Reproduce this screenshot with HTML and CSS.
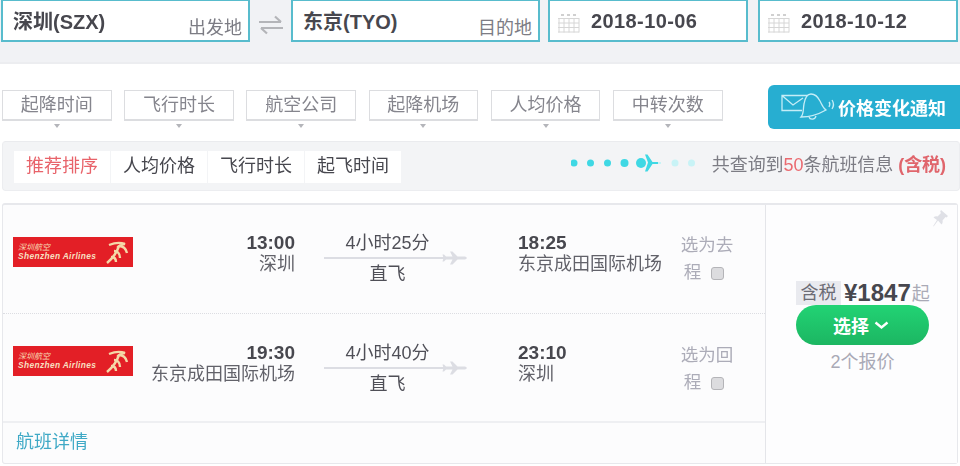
FILE: index.html
```html
<!DOCTYPE html>
<html lang="zh-CN">
<head>
<meta charset="utf-8">
<title>航班查询</title>
<link rel="stylesheet" href="styles.css">
</head>
<body>
<div class="page">
  <header class="search">
    <div class="field field-city"><span class="city">深圳(SZX)</span><span class="hint">出发地</span></div>
    <div class="swap">
      <svg width="26" height="20" viewBox="0 0 26 20"><path d="M1 7h22M17 1.500l6 5.500M25 13H3M9 18.500L3 13" fill="none" stroke="#b4b5b9" stroke-width="2.200"/></svg>
    </div>
    <div class="field field-city"><span class="city">东京(TYO)</span><span class="hint">目的地</span></div>
    <div class="field field-date">
      <svg class="cal" width="22" height="20" viewBox="0 0 22 20"><path d="M0 5.500h21M0 10h21M0 14.500h21M0 19h21M1 5v14.500M6 5v14.500M11 5v14.500M16 5v14.500M21 5v14.500" fill="none" stroke="#d6d6d6"/><path d="M3 1h3v2H3zM9 1h3v2H9zM15 1h3v2h-3z" fill="#d0d0d0"/></svg>
      <span class="date">2018-10-06</span>
    </div>
    <div class="field field-date">
      <svg class="cal" width="22" height="20" viewBox="0 0 22 20"><path d="M0 5.500h21M0 10h21M0 14.500h21M0 19h21M1 5v14.500M6 5v14.500M11 5v14.500M16 5v14.500M21 5v14.500" fill="none" stroke="#d6d6d6"/><path d="M3 1h3v2H3zM9 1h3v2H9zM15 1h3v2h-3z" fill="#d0d0d0"/></svg>
      <span class="date">2018-10-12</span>
    </div>
  </header>

  <section class="filters">
    <div class="filter-list">
      <div class="filter"><div class="filter-btn">起降时间</div><i class="caret"></i></div>
      <div class="filter"><div class="filter-btn">飞行时长</div><i class="caret"></i></div>
      <div class="filter"><div class="filter-btn">航空公司</div><i class="caret"></i></div>
      <div class="filter"><div class="filter-btn">起降机场</div><i class="caret"></i></div>
      <div class="filter"><div class="filter-btn">人均价格</div><i class="caret"></i></div>
      <div class="filter"><div class="filter-btn">中转次数</div><i class="caret"></i></div>
    </div>
    <div class="notify">
      <svg width="58" height="32" viewBox="0 0 58 32" fill="none" stroke="#c5edf7" stroke-width="1.300">
        <path d="M22 19.500H2V4.500h26M2 4.500L13 14l10-7"/>
        <path d="M21 26c3-3 2-8 3-13 1-6 3-10 7-10 4 0 7 3 9 7 2 4 3 7 6 9-7 4-17 7-25 7z" fill="#27aed1"/>
        <path d="M29 26c1 3 6 3 7-1"/>
        <path d="M49 11c1 1 1 3 0 5M52 9c2 3 2 6 0 9"/>
      </svg>
      <span class="notify-text">价格变化通知</span>
    </div>
  </section>

  <section class="sortbar">
    <nav class="tabs">
      <div class="tab tab-on">推荐排序</div>
      <div class="tab">人均价格</div>
      <div class="tab">飞行时长</div>
      <div class="tab">起飞时间</div>
    </nav>
    <div class="summary">
      <svg class="progress" width="132" height="22" viewBox="0 0 132 22">
        <g fill="#3fd8e4">
          <circle cx="3" cy="11" r="3.500"/><circle cx="19.500" cy="11" r="3.500"/><circle cx="36.500" cy="11" r="3.500"/><circle cx="53.500" cy="11" r="4"/><circle cx="70" cy="11" r="5"/>
          <path d="M74 2.500h2.500l5 7.500H87v2h-5.500l-5 7.500H74l3-9z"/>
        </g>
        <g fill="#c8f3f6"><rect x="87" y="10" width="3" height="2"/><circle cx="104" cy="11" r="3.500"/><circle cx="120.500" cy="11" r="3.500"/></g>
      </svg>
      <p class="count">共查询到<em>50</em>条航班信息 <b>(含税)</b></p>
    </div>
  </section>

  <section class="card">
    <div class="legs">
      <div class="leg">
        <svg class="logo" width="120" height="30" viewBox="0 0 120 30"><rect width="120" height="30" fill="#e31f26"/><text x="5" y="13" class="logo-cn">深圳航空</text><text x="5" y="21.500" class="logo-en">Shenzhen Airlines</text><g fill="none" stroke="#f4d9a8" stroke-width="2.400"><path d="M96 8c5-2 11-3 16-1-3 0-5 1-6 2 4 0 7 3 8 7"/><path d="M106 9c-2 6-6 12-12 17"/><path d="M101 14c3 0 6 2 6 7"/><path d="M98 20c3 0 5 1 5 5"/></g></svg>
        <div class="point point-dep"><strong>13:00</strong><span>深圳</span></div>
        <div class="route"><span>4小时25分</span>
          <svg width="144" height="14" viewBox="0 0 144 14"><path d="M0 7h128" stroke="#dcdde3" stroke-width="2"/><path d="M126 .5h2.500l5 5h7c3 0 3 3 0 3h-7l-5 5H126l2.500-5H122l-2 2h-1.500l1-3.500-1-3.500h1.500l2 2h6.500z" fill="#dcdde3"/></svg>
          <span>直飞</span></div>
        <div class="point point-arr"><strong>18:25</strong><span>东京成田国际机场</span></div>
        <label class="pick">选为去程<input type="checkbox" class="check"></label>
      </div>
      <div class="leg leg-next">
        <svg class="logo" width="120" height="30" viewBox="0 0 120 30"><rect width="120" height="30" fill="#e31f26"/><text x="5" y="13" class="logo-cn">深圳航空</text><text x="5" y="21.500" class="logo-en">Shenzhen Airlines</text><g fill="none" stroke="#f4d9a8" stroke-width="2.400"><path d="M96 8c5-2 11-3 16-1-3 0-5 1-6 2 4 0 7 3 8 7"/><path d="M106 9c-2 6-6 12-12 17"/><path d="M101 14c3 0 6 2 6 7"/><path d="M98 20c3 0 5 1 5 5"/></g></svg>
        <div class="point point-dep"><strong>19:30</strong><span>东京成田国际机场</span></div>
        <div class="route"><span>4小时40分</span>
          <svg width="144" height="14" viewBox="0 0 144 14"><path d="M0 7h128" stroke="#dcdde3" stroke-width="2"/><path d="M126 .5h2.500l5 5h7c3 0 3 3 0 3h-7l-5 5H126l2.500-5H122l-2 2h-1.500l1-3.500-1-3.500h1.500l2 2h6.500z" fill="#dcdde3"/></svg>
          <span>直飞</span></div>
        <div class="point point-arr"><strong>23:10</strong><span>深圳</span></div>
        <label class="pick">选为回程<input type="checkbox" class="check"></label>
      </div>
      <div class="details">航班详情</div>
    </div>
    <aside class="offer">
      <svg class="pin" width="15" height="19" viewBox="0 0 15 19"><path d="M8 0l7 6-1.500 1.500-1-.5-3 3.500c.5 1.500 0 3-1 4L5 10.500 1 16l-1 .5.500-1L4 10 .5 7.500c1-1 2.500-1.500 4-1L8 3l-.8-1.200z" fill="#dfe0e6"/></svg>
      <div class="price"><span class="tax">含税</span><strong>¥1847</strong><span class="from">起</span></div>
      <div class="select">选择
        <svg width="15" height="9" viewBox="0 0 15 9"><path d="M1.500 1.500l6 5 6-5" fill="none" stroke="#fff" stroke-width="2.400"/></svg>
      </div>
      <div class="quotes">2个报价</div>
    </aside>
  </section>
</div>
</body>
</html>
```

FILE: styles.css
```css
* { box-sizing: border-box; }
html, body { margin: 0; padding: 0; background: #fff; }
.page {
  width: 960px;
  height: 466px;
  overflow: hidden;
  font-family: "Liberation Sans", "Noto Sans CJK SC", sans-serif;
  color: #4a4a52;
  filter: blur(0.35px);
}

/* search band */
.search {
  display: flex;
  height: 64px;
  padding-left: 1px;
  align-items: flex-start;
  background: #f1f2f5;
  border-bottom: 2px solid #ecedf0;
}
.field {
  display: flex;
  height: 42px;
  background: #fff;
  border: 2px solid #58bccd;
  border-top-width: 1px;
}
.field-city { width: 249px; padding: 0 6px 0 10px; justify-content: space-between; }
.field-date { width: 200px; align-items: center; padding: 2px 0 0 8px; margin-left: 8px; }
.field-date + .field-date { margin-left: 10px; }
.city { font-size: 20px; font-weight: 700; line-height: 40px; margin-top: 1px; color: #47474e; }
.hint { font-size: 18px; line-height: 20px; margin-top: 17px; color: #7c7c84; }
.swap { width: 41px; height: 42px; display: flex; justify-content: center; align-items: center; padding-top: 8px; }
.date { margin-left: 11px; font-size: 20px; font-weight: 700; letter-spacing: .4px; color: #47474e; }
.cal { flex: none; margin-top: 3px; }

/* filters */
.filters { display: flex; align-items: flex-start; justify-content: space-between; height: 44px; margin-top: 21px; padding-left: 2px; }
.filter-list { display: grid; grid-template-columns: repeat(6, 109.600px); column-gap: 12.600px; margin-top: 5px; }
.filter { display: flex; flex-direction: column; align-items: center; }
.filter-btn {
  width: 100%;
  height: 31px;
  border: 1px solid #dcdde0;
  border-bottom-width: 2px;
  background: #fff;
  text-align: center;
  font-size: 18px;
  line-height: 28px;
  color: #85858d;
}
.caret { width: 0; height: 0; margin-top: 3px; border: 3.500px solid transparent; border-top: 4px solid #b4b5ba; border-bottom: 0; }
.notify {
  display: flex;
  align-items: center;
  width: 192px;
  height: 44px;
  padding-left: 12px;
  background: #27aed1;
  border-radius: 6px 0 0 6px;
}
.notify-text { font-size: 18px; font-weight: 700; color: #fff; white-space: nowrap; }

/* sort bar */
.sortbar {
  display: flex;
  justify-content: space-between;
  align-items: flex-start;
  height: 50px;
  margin: 12px 0 0 2px;
  padding: 9px 13px 0 11px;
  background: #f3f4f6;
  border: 1px solid #ecedf0;
  border-top-color: #eaebee;
  border-radius: 4px;
}
.tabs { display: flex; gap: 1px; }
.tab { width: 96px; height: 32px; background: #fff; text-align: center; font-size: 18px; line-height: 30px; color: #47474e; }
.tab-on { color: #e8636a; }
.summary { display: flex; align-items: center; height: 23px; }
.progress { flex: none; margin-right: 9px; }
.count { margin: 0; font-size: 18px; letter-spacing: -.05px; white-space: nowrap; color: #7c7c84; }
.count em { font-style: normal; color: #ea6a70; }
.count b { color: #e0656c; }

/* flight card */
.card {
  display: flex;
  height: 261px;
  margin: 12px 2px 0 2px;
  background: #fcfcfd;
  border: 1px solid #e7e8ec;
  border-top-width: 2px;
  border-radius: 3px;
}
.legs { display: flex; flex-direction: column; width: 763px; border-right: 1px solid #e4e5e9; }
.leg {
  display: grid;
  grid-template-columns: 120px 162px 173px 212px 54px;
  height: 108px;
  padding: 27px 0 0 10px;
}
.leg-next { padding-top: 28px; border-top: 1px dotted #dcdde2; }
.logo { margin-top: 5px; display: block; }
.leg-next .logo { margin-top: 4px; }
.logo-cn { font-family: "Noto Sans CJK SC", sans-serif; font-size: 8px; font-style: italic; fill: #f7d9b4; }
.logo-en { font-family: "Liberation Sans", sans-serif; font-size: 8.400px; font-weight: 700; font-style: italic; fill: #f7dfc0; letter-spacing: .35px; }
.point { display: flex; flex-direction: column; }
.point-arr { padding-left: 50px; }
.point strong { font-size: 19px; line-height: 22px; color: #47474e; }
.point span { font-size: 18px; line-height: 21px; color: #62626a; white-space: nowrap; }
.point-dep { text-align: right; }
.route {
  display: flex;
  flex-direction: column;
  margin-left: 29px;
  width: 144px;
  font-size: 18px;
  line-height: 22px;
  color: #4f4f57;
}
.route svg { display: block; flex: none; margin: -3px 0 -2px; }
.route span { white-space: nowrap; width: 127px; text-align: center; }
.pick { display: block; width: 54px; text-align: center; font-size: 17.500px; line-height: 27px; color: #acacb8; }
.check {
  appearance: none;
  -webkit-appearance: none;
  width: 13px;
  height: 13px;
  margin: 0 6px 0 10px;
  vertical-align: -2px;
  background: #dcdcdf;
  border: 1px solid #b4b4b8;
  border-radius: 3px;
}
.details { flex: 1; padding: 7px 0 0 13px; border-top: 2px solid #eeeff2; font-size: 18px; line-height: 24px; color: #3fa9c6; }

/* offer */
.offer { position: relative; flex: 1; display: flex; flex-direction: column; align-items: center; padding: 76px 28px 0 30px; background: #fdfdfe; }
.pin { position: absolute; top: 5px; right: 9px; }
.price { display: flex; align-items: flex-end; width: 133px; white-space: nowrap; height: 24px; }
.tax { width: 45px; height: 24px; flex: none; text-align: center; background: #e9eaef; font-size: 18px; line-height: 25px; color: #6c6c75; }
.price strong { margin-left: 3px; font-size: 24px; line-height: 24px; color: #47474e; }
.from { margin-left: 1px; font-size: 18px; line-height: 22px; color: #aaaab6; }
.select {
  display: flex;
  align-items: center;
  justify-content: center;
  gap: 5px;
  flex: none;
  width: 133px;
  height: 40px;
  padding-right: 3px;
  border-radius: 20px;
  background: linear-gradient(#22d374, #1cb662);
  font-size: 18px;
  font-weight: 700;
  color: #fff;
}
.quotes { margin-top: 5px; font-size: 18px; line-height: 24px; color: #a9a9b6; }
```
